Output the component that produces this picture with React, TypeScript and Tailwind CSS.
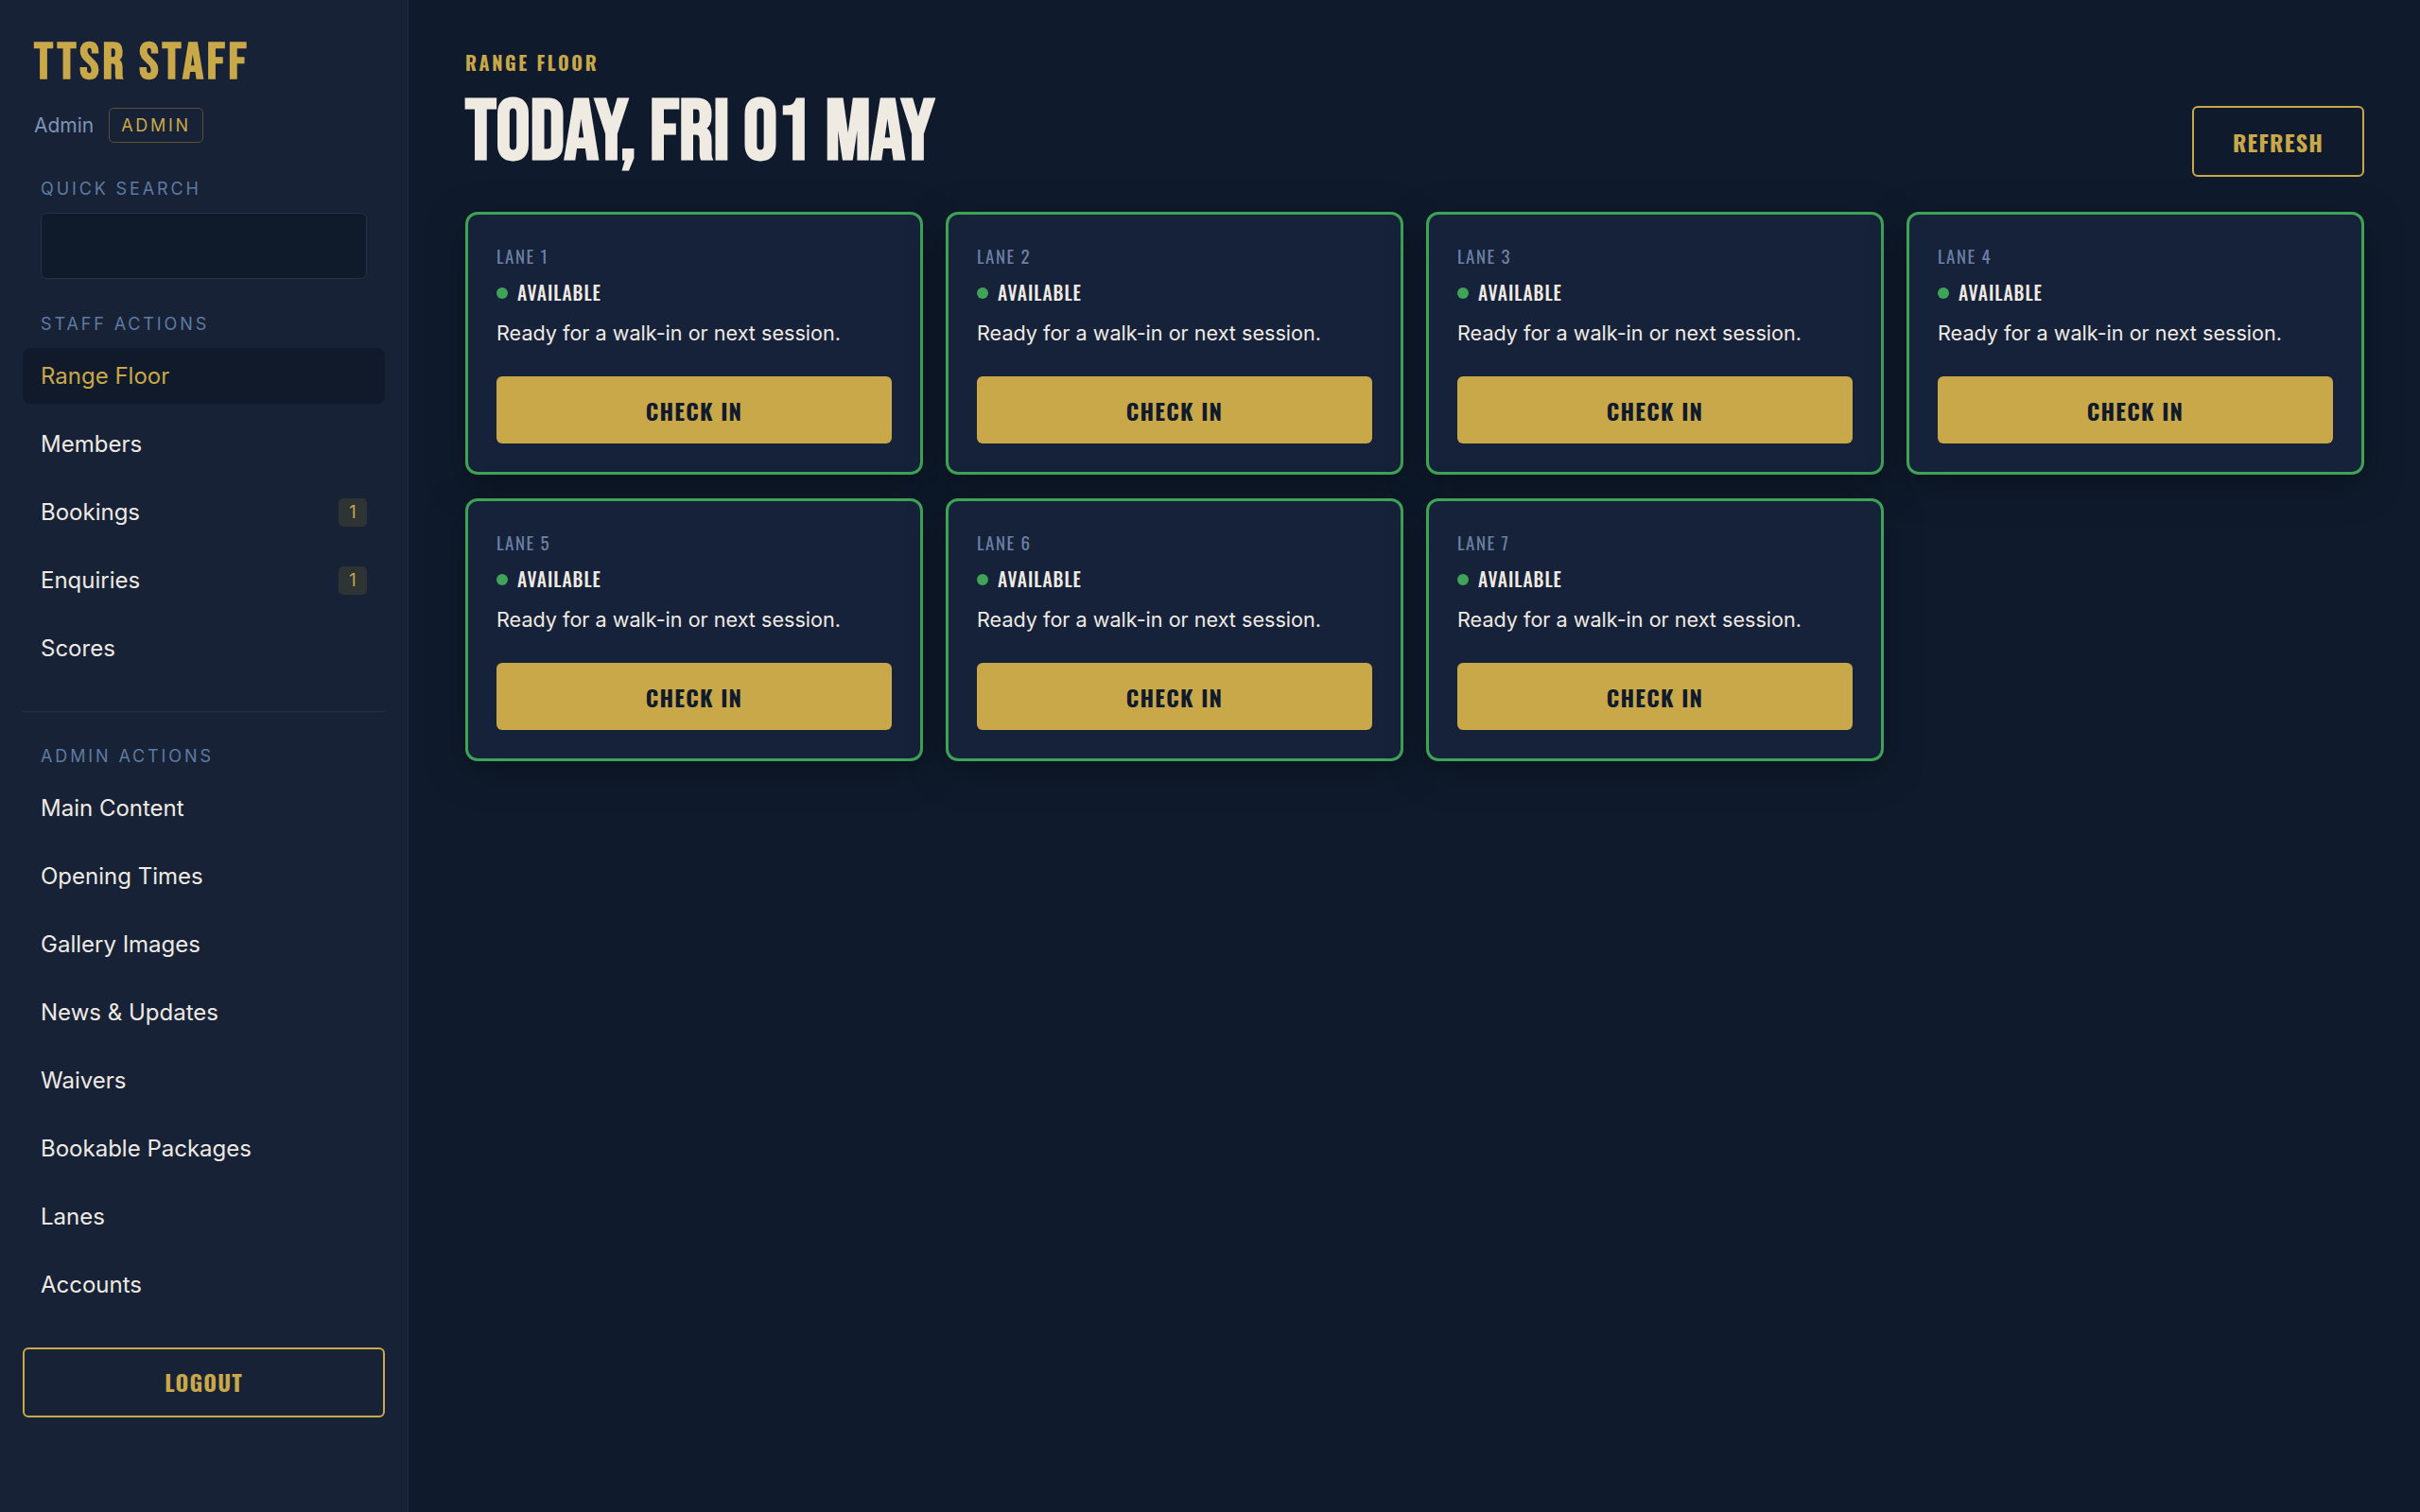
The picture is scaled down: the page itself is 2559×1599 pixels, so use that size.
import React from "react";

// headline face and the narrower label face
const display = "font-['Bebas_Neue','Oswald','Roboto_Condensed',sans-serif]";
const label = "font-['Oswald','Bebas_Neue','Roboto_Condensed',sans-serif]";
const body = "font-['Inter','Noto_Sans',sans-serif]";

const staffLinks = [
  { label: "Range Floor", active: true },
  { label: "Members" },
  { label: "Bookings", count: 1 },
  { label: "Enquiries", count: 1 },
  { label: "Scores" },
];

const adminLinks = [
  "Main Content",
  "Opening Times",
  "Gallery Images",
  "News & Updates",
  "Waivers",
  "Bookable Packages",
  "Lanes",
  "Accounts",
];

const lanes = [1, 2, 3, 4, 5, 6, 7];

function NavItem({
  label,
  active,
  count,
}: {
  label: string;
  active?: boolean;
  count?: number;
}) {
  return (
    <a
      href="#"
      className={`flex h-[59px] items-center justify-between rounded-[8px] px-[19px] text-[24px] ${
        active ? "bg-[#111a2a] text-[#c9a84a]" : "text-[#eeeae3]"
      }`}
    >
      <span>{label}</span>
      {count ? (
        <span className="flex h-[30px] w-[30px] items-center justify-center rounded-[5px] bg-[#2e3334] text-[18px] text-[#c9a84a]">
          {count}
        </span>
      ) : null}
    </a>
  );
}

function SectionLabel({ children }: { children: React.ReactNode }) {
  return (
    <p className="h-[20px] pl-[19px] text-[18px] leading-[20px] tracking-[0.16em] text-[#5f7aa0] uppercase">
      {children}
    </p>
  );
}

function LaneCard({ lane }: { lane: number }) {
  return (
    <div className="flex flex-col rounded-[13px] border-[3px] border-[#3fa356] bg-[#16213a] p-[30px] shadow-[0_10px_40px_rgba(0,0,0,0.35)]">
      <p className={`${label} mt-[2px] h-[22px] text-[19px] leading-[22px] tracking-[0.08em] text-[#6a80a3]`}>
        LANE {lane}
      </p>
      <div className="mt-[17px] flex h-[24px] items-center gap-[10px]">
        <span className="h-[12px] w-[12px] rounded-full bg-[#3fa358]" />
        <span className={`${label} text-[19.5px] leading-[24px] font-medium tracking-[0.05em] text-[#efeae2]`}>
          AVAILABLE
        </span>
      </div>
      <p className="mt-[14px] h-[32px] text-[21.6px] leading-[32px] text-[#efeae2]">
        Ready for a walk-in or next session.
      </p>
      <button
        className={`${label} mt-[30px] flex h-[71px] items-center justify-center rounded-[6px] bg-[#c9a84a] text-[24px] font-bold tracking-[0.05em] text-[#111a2b]`}
      >
        CHECK IN
      </button>
    </div>
  );
}

export default function App() {
  return (
    <div className={`${body} flex min-h-[1599px] w-full bg-[#0f1b2d]`}>
      <aside className="flex w-[432px] shrink-0 flex-col border-r border-[#1f2b40] bg-[#172236] px-[24px] pt-[36px]">
        <div className="pl-[12px]">
          <h1 className={`${display} h-[58px] pt-[4px] text-[55px] leading-[54px] font-bold tracking-[0.07em] text-[#c9a84a]`}>
            TTSR STAFF
          </h1>
          <div className="mt-[20px] flex items-center gap-[16px]">
            <span className="text-[21px] text-[#7f93b5]">Admin</span>
            <span className="flex h-[37px] items-center rounded-[5px] border border-[#5c4e2e] px-[12px] text-[18px] tracking-[0.15em] text-[#c9a84a]">
              ADMIN
            </span>
          </div>
        </div>

        <div className="mt-[39px]">
          <SectionLabel>Quick Search</SectionLabel>
          <div className="mt-[15px] px-[19px]">
            <input
              type="text"
              className="h-[70px] w-full rounded-[6px] border border-[#243148] bg-[#0f1a2b] px-4 text-[20px] text-[#eeeae3] outline-none"
            />
          </div>
        </div>

        <div className="mt-[38px]">
          <SectionLabel>Staff Actions</SectionLabel>
          <nav className="mt-[15px] flex flex-col gap-[13px]">
            {staffLinks.map((l) => (
              <NavItem key={l.label} {...l} />
            ))}
          </nav>
        </div>

        <div className="mt-[37px] h-px bg-[#22304a]" />

        <div className="mt-[37px]">
          <SectionLabel>Admin Actions</SectionLabel>
          <nav className="mt-[15px] flex flex-col gap-[13px]">
            {adminLinks.map((l) => (
              <NavItem key={l} label={l} />
            ))}
          </nav>
        </div>

        <button
          className={`${label} mt-[37px] flex h-[74px] items-center justify-center rounded-[6px] border-2 border-[#c9a84a] text-[23.5px] font-bold tracking-[0.05em] text-[#c9a84a]`}
        >
          LOGOUT
        </button>
      </aside>

      <main className="flex-1 pt-[54px] pr-[59px] pl-[60px]">
        <div className="flex items-start justify-between">
          <div>
            <p className={`${label} h-[24px] text-[20px] leading-[24px] font-bold tracking-[0.13em] text-[#c9a84a]`}>
              RANGE FLOOR
            </p>
            <h2 className={`${display} mt-[23px] h-[80px] text-[90px] leading-[80px] font-bold text-[#efeae2]`}>
              TODAY, FRI 01 MAY
            </h2>
          </div>
          <button
            className={`${label} mt-[58px] -mb-[8px] flex h-[75px] w-[182px] items-center justify-center rounded-[6px] border-2 border-[#c9a84a] text-[24px] font-bold tracking-[0.05em] text-[#c9a84a]`}
          >
            REFRESH
          </button>
        </div>

        <div className="mt-[43px] grid grid-cols-4 gap-x-[24px] gap-y-[25px]">
          {lanes.map((n) => (
            <LaneCard key={n} lane={n} />
          ))}
        </div>
      </main>
    </div>
  );
}
